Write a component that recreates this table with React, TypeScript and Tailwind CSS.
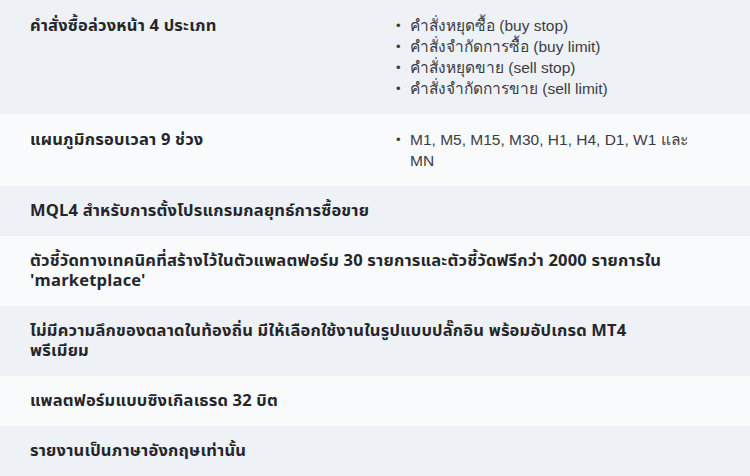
import React from "react";

type Row = {
  title: string;
  items?: string[];
};

const ROWS: Row[] = [
  {
    title: "คำสั่งซื้อล่วงหน้า 4 ประเภท",
    items: [
      "คำสั่งหยุดซื้อ (buy stop)",
      "คำสั่งจำกัดการซื้อ (buy limit)",
      "คำสั่งหยุดขาย (sell stop)",
      "คำสั่งจำกัดการขาย (sell limit)",
    ],
  },
  {
    title: "แผนภูมิกรอบเวลา 9 ช่วง",
    items: ["M1, M5, M15, M30, H1, H4, D1, W1 และ MN"],
  },
  { title: "MQL4 สำหรับการตั้งโปรแกรมกลยุทธ์การซื้อขาย" },
  {
    title:
      "ตัวชี้วัดทางเทคนิคที่สร้างไว้ในตัวแพลตฟอร์ม 30 รายการและตัวชี้วัดฟรีกว่า 2000 รายการใน 'marketplace'",
  },
  {
    title:
      "ไม่มีความลึกของตลาดในท้องถิ่น มีให้เลือกใช้งานในรูปแบบปลั๊กอิน พร้อมอัปเกรด MT4 พรีเมียม",
  },
  { title: "แพลตฟอร์มแบบซิงเกิลเธรด 32 บิต" },
  { title: "รายงานเป็นภาษาอังกฤษเท่านั้น" },
];

export default function App() {
  return (
    <div className="w-[750px] h-[476px] overflow-hidden font-['Noto_Sans_Thai','Noto_Sans','Liberation_Sans',sans-serif] text-[#24262a]">
      {ROWS.map((row, idx) => (
        <div
          key={idx}
          className={`flex px-[30px] py-[15px] ${idx % 2 === 0 ? "bg-[#eef1f6]" : "bg-[#f9fafc]"}`}
        >
          {row.items ? (
            <>
              <div className="w-[365px] shrink-0 pt-[1px] text-[16.5px] leading-[20px] tracking-[0.2px] font-bold">
                {row.title}
              </div>
              <ul className="w-[305px] font-['Liberation_Sans','Noto_Sans',sans-serif] text-[15.5px] leading-[21px] text-[#3b3d42]">
                {row.items.map((item) => (
                  <li key={item} className="flex">
                    <span className="w-[15px] shrink-0 pl-[1px] text-[13px]">•</span>
                    <span>{item}</span>
                  </li>
                ))}
              </ul>
            </>
          ) : (
            <div className="max-w-[645px] text-[16.5px] leading-[20px] tracking-[0.2px] font-bold">
              {row.title}
            </div>
          )}
        </div>
      ))}
    </div>
  );
}
